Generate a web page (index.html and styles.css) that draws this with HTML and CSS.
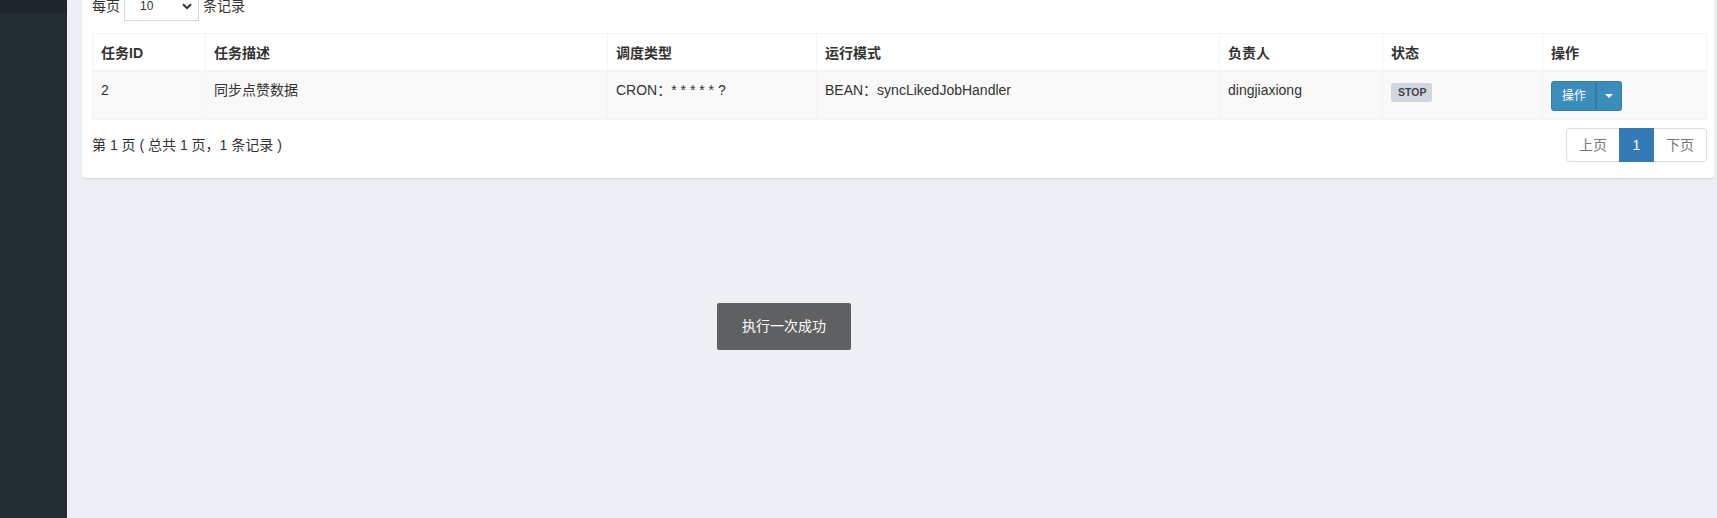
FILE: index.html
```html
<!DOCTYPE html>
<html lang="zh-CN">
<head>
<meta charset="utf-8">
<title>任务管理</title>
<link rel="stylesheet" href="styles.css">
</head>
<body>
<div class="layout">
  <aside class="sidebar">
    <div class="sidebar-top"></div>
  </aside>
  <main class="content">
    <section class="box">
      <div class="length-row">
        <span>每页</span>
        <div class="select">
          <span>10</span>
          <svg width="10" height="7" viewBox="0 0 10 7"><path d="M1 1.2 L5 5.2 L9 1.2" fill="none" stroke="#333" stroke-width="2"/></svg>
        </div>
        <span>条记录</span>
      </div>
      <table class="grid">
        <colgroup>
          <col style="width:113px"><col style="width:402px"><col style="width:209px"><col style="width:403px"><col style="width:163px"><col style="width:160px"><col style="width:164px">
        </colgroup>
        <thead>
          <tr><th>任务ID</th><th>任务描述</th><th>调度类型</th><th>运行模式</th><th>负责人</th><th>状态</th><th>操作</th></tr>
        </thead>
        <tbody>
          <tr>
            <td>2</td>
            <td>同步点赞数据</td>
            <td>CRON：* * * * * ?</td>
            <td>BEAN：syncLikedJobHandler</td>
            <td>dingjiaxiong</td>
            <td><span class="label">STOP</span></td>
            <td>
              <div class="btn-group">
                <button class="btn btn-main">操作</button>
                <button class="btn btn-caret"><span class="caret"></span></button>
              </div>
            </td>
          </tr>
        </tbody>
      </table>
      <div class="footer-row">
        <div class="info">第 1 页 ( 总共 1 页，1 条记录 )</div>
        <ul class="pagination">
          <li class="disabled">上页</li>
          <li class="active">1</li>
          <li class="disabled">下页</li>
        </ul>
      </div>
    </section>
  </main>
</div>
<div class="toast">执行一次成功</div>
</body>
</html>
```
FILE: styles.css
```css
html, body {
  margin: 0;
  padding: 0;
  height: 100%;
  overflow: hidden;
}
body {
  font-family: "Liberation Sans", "Noto Sans CJK SC", Arial, sans-serif;
  font-size: 14px;
  line-height: 20px;
  color: #333;
  background: #ecf0f5;
}
.layout {
  display: flex;
  height: 518px;
}
.sidebar {
  width: 67px;
  flex: none;
  background: #222d32;
}
.sidebar-top {
  height: 13px;
  background: #1e262b;
}
.content {
  flex: 1;
  padding: 0 4px 0 15px;
  background: #ecf0f5;
}
.box {
  margin-top: -19px;
  background: #fff;
  border-radius: 3px;
  box-shadow: 0 1px 1px rgba(0, 0, 0, 0.12);
  padding: 10px 7px 16px 10px;
}
.length-row {
  display: flex;
  align-items: center;
  gap: 4px;
  height: 30px;
}
.select {
  width: 75px;
  height: 30px;
  box-sizing: border-box;
  border: 1px solid #d2d6de;
  display: flex;
  align-items: center;
  justify-content: space-between;
  padding: 0 6px 0 15px;
  font-size: 12px;
}
.grid {
  margin-top: 12px;
  width: 100%;
  table-layout: fixed;
  border-collapse: collapse;
  border: 1px solid #f4f4f4;
}
.grid th, .grid td {
  border: 1px solid #f4f4f4;
  padding: 8px;
  text-align: left;
  vertical-align: top;
  line-height: 20px;
  white-space: nowrap;
}
.grid th {
  font-weight: bold;
  border-bottom-width: 2px;
  padding-top: 9px;
  padding-bottom: 7px;
}
.grid tbody tr {
  background: #f9f9f9;
}
.label {
  display: inline-block;
  margin-top: 3px;
  background: #d2d6de;
  color: #444;
  font-size: 10.5px;
  font-weight: bold;
  line-height: 1;
  padding: 4px 6px 4px 7px;
  border-radius: 3px;
}
.btn-group {
  display: inline-flex;
  margin-top: 1px;
}
.btn {
  font-family: inherit;
  font-size: 12px;
  line-height: 18px;
  height: 30px;
  box-sizing: border-box;
  color: #fff;
  background: #3c8dbc;
  border: 1px solid #367fa9;
  margin: 0;
  cursor: pointer;
}
.btn-main {
  width: 45px;
  padding: 5px 10px;
  border-radius: 3px 0 0 3px;
}
.btn-caret {
  width: 26px;
  padding: 0;
  border-left: 0;
  border-radius: 0 3px 3px 0;
  display: flex;
  align-items: center;
  justify-content: center;
  box-shadow: inset 1px 0 0 #2e77a2;
}
.caret {
  width: 0;
  height: 0;
  border-left: 4px solid transparent;
  border-right: 4px solid transparent;
  border-top: 4px solid #fff;
  margin-left: 1px;
}
.footer-row {
  display: flex;
  align-items: center;
  justify-content: space-between;
  margin-top: 8px;
}
.pagination {
  display: flex;
  list-style: none;
  margin: 0;
  padding: 0;
}
.pagination li {
  height: 34px;
  box-sizing: border-box;
  padding: 6px 12px;
  line-height: 20px;
  border: 1px solid #ddd;
  margin-left: -1px;
  background: #fff;
  color: #777;
}
.pagination li:first-child {
  border-radius: 4px 0 0 4px;
  margin-left: 0;
}
.pagination li:last-child {
  border-radius: 0 4px 4px 0;
}
.pagination li.active {
  background: #337ab7;
  border-color: #337ab7;
  color: #fff;
  width: 35px;
  text-align: center;
  position: relative;
}
.toast {
  position: absolute;
  left: 717px;
  top: 303px;
  width: 134px;
  height: 47px;
  box-sizing: border-box;
  padding: 12px 0;
  line-height: 23px;
  text-align: center;
  color: #fff;
  background: rgba(0, 0, 0, 0.6);
  border-radius: 2px;
  font-size: 14px;
}
```
